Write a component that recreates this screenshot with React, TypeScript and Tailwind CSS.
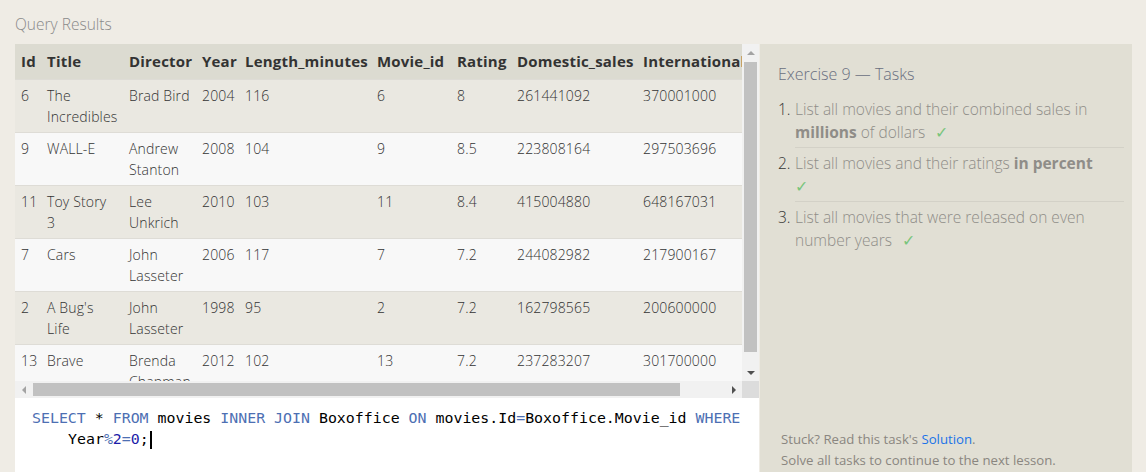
import React from "react";

const cols = [
  { key: "Id", w: 26 },
  { key: "Title", w: 82 },
  { key: "Director", w: 73 },
  { key: "Year", w: 43 },
  { key: "Length_minutes", w: 132 },
  { key: "Movie_id", w: 80 },
  { key: "Rating", w: 60 },
  { key: "Domestic_sales", w: 126 },
  { key: "International_sales", w: 160 },
];

const rows = [
  ["6", "The Incredibles", "Brad Bird", "2004", "116", "6", "8", "261441092", "370001000"],
  ["9", "WALL-E", "Andrew Stanton", "2008", "104", "9", "8.5", "223808164", "297503696"],
  ["11", "Toy Story 3", "Lee Unkrich", "2010", "103", "11", "8.4", "415004880", "648167031"],
  ["7", "Cars", "John Lasseter", "2006", "117", "7", "7.2", "244082982", "217900167"],
  ["2", "A Bug's Life", "John Lasseter", "1998", "95", "2", "7.2", "162798565", "200600000"],
  ["13", "Brave", "Brenda Chapman", "2012", "102", "13", "7.2", "237283207", "301700000"],
];

const sans = { fontFamily: '"Open Sans", "Noto Sans", sans-serif' };

export default function App() {
  return (
    <div
      className="w-[1146px] h-[472px] bg-[#efece5] overflow-hidden pl-[15px] pr-[14px] flex flex-col"
      style={sans}
    >
      <div className="h-[44px] pt-[14px] text-[15.5px] leading-[20px] font-light text-[#8a8a8a]">
        Query Results
      </div>
      <div className="flex flex-1 min-h-0">
        {/* Left column */}
        <div className="w-[744px] flex flex-col">
          <div className="flex h-[337px]">
            <div className="w-[727px] h-[337px] overflow-hidden bg-[#f8f8f8]">
              <table className="table-fixed border-collapse" style={{ width: cols.reduce((a, c) => a + c.w, 0) }}>
                <colgroup>
                  {cols.map((c) => (
                    <col key={c.key} style={{ width: c.w }} />
                  ))}
                </colgroup>
                <thead>
                  <tr className="bg-[#dcdbd1] h-[35px]">
                    {cols.map((c) => (
                      <th
                        key={c.key}
                        className="text-left pl-[6px] pr-0 text-[15px] tracking-[0.2px] font-bold text-[#333] whitespace-nowrap overflow-hidden align-middle"
                      >
                        {c.key}
                      </th>
                    ))}
                  </tr>
                </thead>
                <tbody>
                  {rows.map((r, i) => (
                    <tr
                      key={i}
                      className={
                        (i % 2 === 0 ? "bg-[#eae8e1]" : "bg-[#f8f8f8]") +
                        " border-t border-[#dedcd6] h-[53px]"
                      }
                    >
                      {r.map((v, j) => (
                        <td
                          key={j}
                          className="align-top pl-[6px] pr-[6px] pt-[5px] pb-[5px] text-[14px] tracking-[0.15px] leading-[21px] font-light text-[#333]"
                        >
                          {v}
                        </td>
                      ))}
                    </tr>
                  ))}
                </tbody>
              </table>
            </div>
            {/* vertical scrollbar */}
            <div className="w-[17px] h-[337px] bg-[#f1f1f1] flex flex-col items-center">
              <div className="h-[18px] flex items-center justify-center">
                <div className="w-0 h-0 border-l-[4px] border-r-[4px] border-b-[4px] border-l-transparent border-r-transparent border-b-[#a3a3a3]" />
              </div>
              <div className="w-[13px] h-[290px] bg-[#c1c1c1]" />
              <div className="flex-1 flex items-end justify-center pb-[6px]">
                <div className="w-0 h-0 border-l-[4px] border-r-[4px] border-t-[4px] border-l-transparent border-r-transparent border-t-[#505050]" />
              </div>
            </div>
          </div>
          <div className="flex h-[17px]">
            <div className="w-[727px] h-[17px] bg-[#f1f1f1] flex items-center">
              <div className="w-[18px] flex items-center justify-center">
                <div className="w-0 h-0 border-t-[4px] border-b-[4px] border-r-[4px] border-t-transparent border-b-transparent border-r-[#a3a3a3]" />
              </div>
              <div className="w-[647px] h-[13px] bg-[#c1c1c1]" />
              <div className="flex-1 flex items-center justify-end pr-[6px]">
                <div className="w-0 h-0 border-t-[4px] border-b-[4px] border-l-[4px] border-t-transparent border-b-transparent border-l-[#505050]" />
              </div>
            </div>
            <div className="w-[17px] h-[17px] bg-[#dcdcdc]" />
          </div>
          <div
            className="flex-1 bg-white pl-[17px] pt-[10px] text-[14.9px] leading-[21px] text-black"
            style={{ fontFamily: '"DejaVu Sans Mono", "Liberation Mono", monospace' }}
          >
            <div className="whitespace-pre">
              <span className="text-[#4d6fb3]">SELECT</span> * <span className="text-[#4d6fb3]">FROM</span> movies{" "}
              <span className="text-[#4d6fb3]">INNER JOIN</span> Boxoffice <span className="text-[#4d6fb3]">ON</span> movies.Id
              <span className="text-[#4d6fb3]">=</span>Boxoffice.Movie_id <span className="text-[#4d6fb3]">WHERE</span>
            </div>
            <div className="whitespace-pre pl-[36px] flex items-center">
              <span>Year</span>
              <span className="text-[#4d6fb3]">%</span>
              <span className="text-[#1c1ca8]">2</span>
              <span className="text-[#4d6fb3]">=</span>
              <span className="text-[#1c1ca8]">0</span>
              <span>;</span>
              <span className="inline-block w-[2px] h-[18px] bg-black ml-[1px]" />
            </div>
          </div>
        </div>
        {/* Right panel */}
        <div className="ml-[1px] flex-1 bg-[#e1dfd4] pl-[18px] pr-[8px] pt-[19px] pb-[1px] flex flex-col">
          <div className="text-[16px] leading-[22px] font-light text-[#6a6f80]">Exercise 9 — Tasks</div>
          <ol className="mt-[13px] text-[15.5px] leading-[23px] font-light text-[#8f8d88]">
            <li className="flex">
              <span className="w-[17px] text-[#333]">1.</span>
              <div className="flex-1 border-b border-[#d3d1c7] pb-[3px]">
                List all movies and their combined sales in <b className="font-bold">millions</b> of dollars{" "}
                <span className="ml-[6px] text-[#79c57c]">✓</span>
              </div>
            </li>
            <li className="flex mt-[4px]">
              <span className="w-[17px] text-[#333]">2.</span>
              <div className="flex-1 border-b border-[#d3d1c7] pb-[3px]">
                List all movies and their ratings <b className="font-bold">in percent</b>
                <br />
                <span className="text-[#79c57c]">✓</span>
              </div>
            </li>
            <li className="flex mt-[4px]">
              <span className="w-[17px] text-[#333]">3.</span>
              <div className="flex-1">
                List all movies that were released on even number years{" "}
                <span className="ml-[6px] text-[#79c57c]">✓</span>
              </div>
            </li>
          </ol>
          <div className="mt-auto pl-[3px] text-[13.2px] leading-[21px] text-[#8a8680]">
            <div>
              Stuck? Read this task's <span className="text-[#1a73e8]">Solution</span>.
            </div>
            <div>Solve all tasks to continue to the next lesson.</div>
          </div>
        </div>
      </div>
    </div>
  );
}
